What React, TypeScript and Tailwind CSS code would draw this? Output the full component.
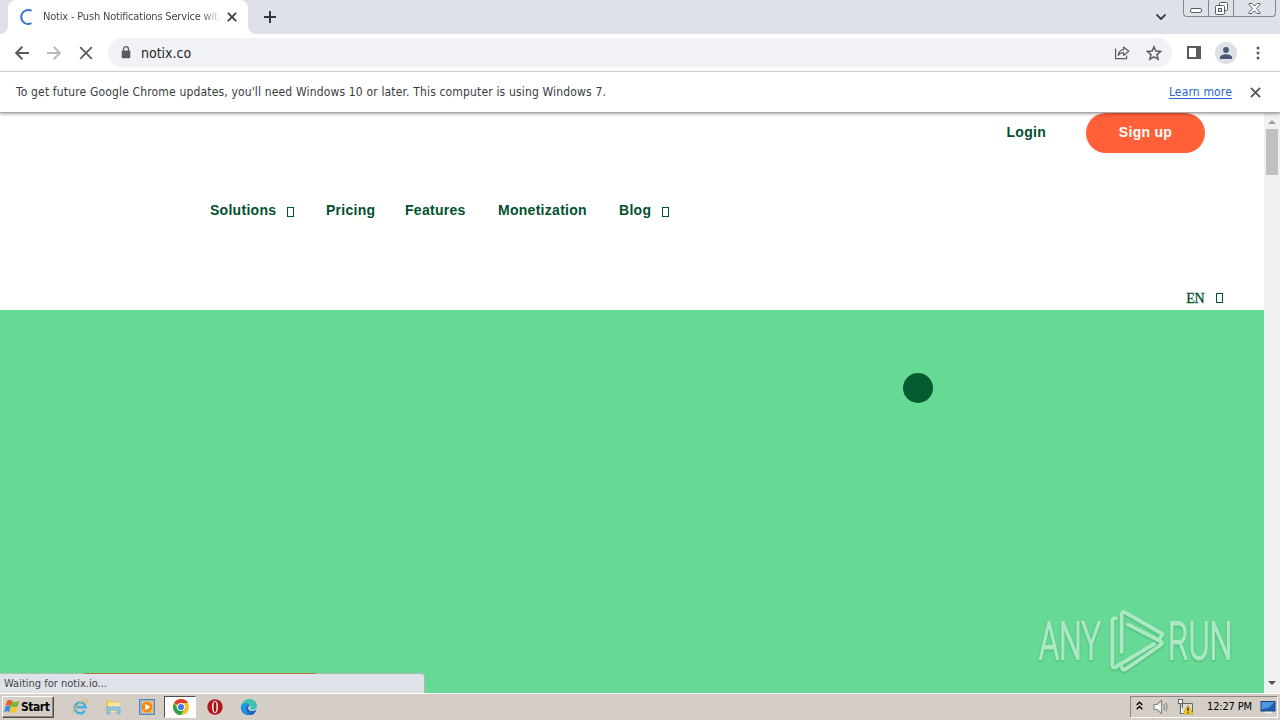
import { ChevronDown } from "lucide-react";

const NAV = [
  { label: "Solutions", menu: true, width: "w-[86px]" },
  { label: "Pricing", menu: false, width: "w-[49px]" },
  { label: "Features", menu: false, width: "w-[63px]" },
  { label: "Monetization", menu: false, width: "w-[91px]" },
  { label: "Blog", menu: true, width: "w-[52px]" },
];

function MissingGlyph() {
  return <span className="mt-[3px] block h-[10px] w-[7px] border border-[#03512d]" />;
}

function Cross({ className }: { className: string }) {
  return (
    <svg viewBox="0 0 12 12" className={className} fill="none" stroke="currentColor">
      <path d="M1 1l10 10M11 1L1 11" />
    </svg>
  );
}

function TabStrip() {
  return (
    <div className="flex h-[34px] items-start bg-[#dee1e8]">
      <div className="flex h-[34px] w-2 items-end bg-white">
        <div className="h-[34px] w-2 rounded-br-lg bg-[#dee1e8]" />
      </div>
      <div className="flex h-[34px] w-[240px] items-center rounded-t-lg bg-white pl-[11px]">
        <svg viewBox="0 0 16 16" className="h-4 w-4 shrink-0" fill="none" stroke="#3975cd" strokeWidth="2">
          <path d="M12.5 1.8A7 7 0 1 0 12.5 14.2" />
        </svg>
        <div className="ml-2 w-[176px] overflow-hidden bg-linear-to-r from-[#3c4043] from-90% to-[#3c4043]/15 bg-clip-text text-[11px] tracking-[-0.19px] whitespace-nowrap text-transparent">
          Notix - Push Notifications Service with
        </div>
        <Cross className="ml-2 h-[10px] w-[10px] stroke-[2.2] text-[#3c4043]" />
      </div>
      <div className="h-[34px] w-2 bg-white">
        <div className="h-[34px] w-2 rounded-bl-lg bg-[#dee1e8]" />
      </div>
      <svg viewBox="0 0 12 12" className="mt-[11px] ml-2 h-3 w-3" stroke="#35383d" strokeWidth="2">
        <path d="M6 0v12M0 6h12" />
      </svg>
      <ChevronDown className="mt-[9px] ml-auto h-4 w-4 text-[#3c4043]" strokeWidth={2.7} />
      <div className="mr-[4px] ml-[14px] flex h-[17px] w-[93px] rounded-b-[4px] border border-t-0 border-[#85878d] text-[#5b5d66]">
        <div className="flex w-[25px] justify-center border-r border-[#85878d] pt-[8px]">
          <div className="h-[5px] w-3 rounded-[2px] border border-[#5b5d66] bg-white" />
        </div>
        <div className="flex w-[25px] justify-center border-r border-[#85878d] pt-[2px]">
          <svg viewBox="0 0 13 13" className="h-[13px] w-[13px]" fill="#fff" stroke="currentColor">
            <rect x="4.5" y=".5" width="8" height="8" rx="1" />
            <rect x=".5" y="3.5" width="9" height="9" rx="1" />
            <rect x="3.5" y="6.5" width="3" height="3" fill="#dee1e8" />
          </svg>
        </div>
        <div className="flex flex-1 justify-center pt-[3px]">
          <svg viewBox="0 0 13 11" className="h-[11px] w-[13px]" fill="#fff" stroke="currentColor">
            <path d="M1 .5h3l2.5 2.7L9 .5h3v1L8.5 5.5l3.5 4v1H9L6.5 7.8 4 10.5H1v-1l3.5-4L1 1.5z" />
          </svg>
        </div>
      </div>
    </div>
  );
}

function Toolbar() {
  return (
    <div className="flex h-[38px] items-center border-b border-[#d9dadd] bg-white text-[#5a5c60]">
      <svg viewBox="0 0 14 14" className="ml-[15px] h-[14px] w-[14px]" fill="none" stroke="currentColor" strokeWidth="2">
        <path d="M14 7H1.5M7.3 .8L1.2 7l6.1 6.2" />
      </svg>
      <svg viewBox="0 0 14 14" className="ml-[18px] h-[14px] w-[14px]" fill="none" stroke="#b7b9bc" strokeWidth="2">
        <path d="M0 7h12.5M6.7 .8L12.8 7l-6.1 6.2" />
      </svg>
      <Cross className="ml-[18px] h-[14px] w-[14px] stroke-[1.5]" />
      <div className="ml-[15px] flex h-[29px] w-[1064px] items-center rounded-full bg-[#f0f2f5] pr-2.5 pl-[13px]">
        <svg viewBox="0 0 10 13" className="h-[13px] w-[10px]">
          <rect x=".7" y="4.6" width="8.6" height="7.6" rx="1" fill="currentColor" />
          <path d="M2.5 5V3.2a2.5 2.5 0 0 1 5 0V5" fill="none" stroke="currentColor" strokeWidth="1.3" />
        </svg>
        <div className="ml-[10px] pt-[2px] text-[14px] text-[#25272c]">notix.co</div>
        <svg viewBox="0 0 16 15" className="ml-auto h-[15px] w-4" fill="none" stroke="currentColor" strokeWidth="1.2" strokeLinejoin="round">
          <path d="M1.600 3.500v10.200h11V10.500M4.200 10.300C4.800 6.500 6.500 4.700 9.700 4.600V2l5 4.200-5 4.200V7.700c-2.500 0-4.200.8-5.500 2.600z" />
        </svg>
        <svg viewBox="0 0 16 16" className="ml-4 h-4 w-4" fill="none" stroke="currentColor" strokeWidth="1.5">
          <path d="M8 1.800l1.900 4.300 4.700.4-3.600 3.100 1.100 4.600L8 11.800l-4.100 2.400L5 9.600 1.400 6.500l4.700-.4z" />
        </svg>
      </div>
      <div className="ml-[15px] h-[13px] w-[14px] border-2 border-r-[5px] border-[#5a5c60]" />
      <div className="ml-[14px] flex h-[22px] w-[22px] items-center justify-center rounded-full bg-[#dde1e7]">
        <svg viewBox="0 0 12 12" className="h-3 w-3" fill="#4b5878">
          <circle cx="6" cy="3" r="2.9" />
          <path d="M0 12v-1.600C0 8.300 3.500 7.300 6 7.300s6 1 6 3.100V12z" />
        </svg>
      </div>
      <svg viewBox="0 0 4 14" className="ml-[19px] h-[14px] w-1" fill="currentColor">
        <circle cx="2" cy="2" r="1.5" />
        <circle cx="2" cy="7" r="1.5" />
        <circle cx="2" cy="12" r="1.5" />
      </svg>
    </div>
  );
}

function InfoBar() {
  return (
    <div className="relative z-10 flex h-[41px] items-center border-b border-[#a9a9a9] bg-white pr-[19px] pl-4 text-[12px] tracking-[0.16px] text-[#3a3c40] shadow-[0_1px_3px_rgba(0,0,0,0.35)]">
      <div className="whitespace-nowrap">
        To get future Google Chrome updates, you'll need Windows 10 or later. This computer is using Windows 7.
      </div>
      <div className="ml-auto text-[#2666c8] underline underline-offset-2">Learn more</div>
      <Cross className="ml-[18px] h-[11px] w-[11px] stroke-[2.1] text-[#5a5c60]" />
    </div>
  );
}

function Watermark() {
  return (
    <svg
      viewBox="0 0 200 70"
      className="absolute right-[27px] bottom-[17px] h-[70px] w-[200px] overflow-visible drop-shadow-[0_1px_1px_rgba(0,80,40,0.3)]"
    >
      <g fill="#aae9c4" stroke="#aae9c4" strokeWidth="1.8" fontFamily="Roboto, sans-serif" fontSize="51" fontWeight="300">
        <text transform="translate(2 53) scale(.63 1)">ANY</text>
        <text transform="translate(131 53) scale(.63 1)">RUN</text>
      </g>
      <g fill="none" stroke="#aae9c4" strokeWidth="3.8" strokeLinejoin="round" strokeLinecap="round">
        <path d="M79 12.500c-2-1-3.700 0-3.700 2V59c0 2.500 1.500 3 3.500 2L117 38" />
        <path d="M84.700 46V8.500c0-2.500 1.500-3 3.500-2L125.500 28l-2 3.500" />
        <path d="M91 18.500l32 16.500c2.500 1.500 2.500 3 0 4.500L89 63c-2.500 1.500-4 .5-4-1.500" />
      </g>
    </svg>
  );
}

function StatusBubble() {
  return (
    <div className="absolute bottom-0 left-0 w-[425px]">
      <div className="h-5 rounded-tr-[4px] border-t border-r border-[#aeb9b8] bg-[#dfe2e9] pt-px pl-1 text-[11px] leading-[18px] text-[#44464a]">
        Waiting for notix.io...
      </div>
      <div className="absolute top-0 left-[84px] h-px w-[232px] bg-[#b5703f]" />
    </div>
  );
}

function Page() {
  return (
    <div className="flex h-[580px] bg-white">
      <div className="relative flex w-[1264px] flex-col overflow-hidden">
        <div className="h-[197px] font-['Liberation_Sans',Arial,sans-serif] text-[14px] font-bold tracking-[0.28px] text-[#03512d]">
          <div className="flex h-10 items-center justify-end gap-10 pr-[59px]">
            <span className="-mt-0.5">Login</span>
            <span className="flex h-10 w-[119px] items-center justify-center rounded-full bg-[#ff6037] pb-0.5 text-white">
              Sign up
            </span>
          </div>
          <div className="mt-[47px] flex h-5 items-center gap-[30px] pl-[210px]">
            {NAV.map((item) => (
              <span key={item.label} className={`flex items-center gap-[11px] ${item.width}`}>
                {item.label}
                {item.menu && <MissingGlyph />}
              </span>
            ))}
          </div>
          <div className="mt-[68px] flex h-5 items-center justify-end gap-[12px] pr-[41px] font-['Liberation_Serif',serif] font-normal tracking-[-0.5px]">
            <span className="pt-px [-webkit-text-stroke:0.3px_#03512d]">EN</span>
            <span className="-mt-[3px]">
              <MissingGlyph />
            </span>
          </div>
        </div>
        <div className="flex-1 bg-[#66da94] pt-[63px] pl-[903px]">
          <div className="h-[30px] w-[30px] rounded-full bg-[#045b30]" />
        </div>
        <Watermark />
        <StatusBubble />
      </div>
      <div className="flex w-4 flex-col items-center bg-[#f1f1f1]">
        <svg viewBox="0 0 8 4" className="mt-[7px] h-1 w-2" fill="#a0a0a0">
          <path d="M0 4l4-4 4 4z" />
        </svg>
        <div className="mt-[5px] h-[46px] w-3 bg-[#c1c1c1]" />
        <svg viewBox="0 0 8 4" className="mt-auto mb-[8px] h-1 w-2" fill="#505050">
          <path d="M0 0l4 4 4-4z" />
        </svg>
      </div>
    </div>
  );
}

function StartFlag() {
  return (
    <svg viewBox="0 0 16 16" className="h-4 w-4 shrink-0">
      <path d="M3 2c2-1.500 3.500-1 5.300 0L7 7.500C5 6 3.500 6 1.500 7z" fill="#e85c24" />
      <path d="M8.300 2.300c2 1 4 1 7-.5L13.700 7.500c-2 1-4 1-6.700 0z" fill="#75b736" />
      <path d="M1.500 7.500c2-1.200 3.500-1 5.300 0L5.400 13C3.500 12 2 12 0 13z" fill="#3b8ddb" />
      <path d="M6.900 7.800c2 1 4 1 6.800-.2l-1.500 5.300c-2 1.200-4 1.300-6.700.3z" fill="#f7c52c" />
    </svg>
  );
}

function Explorer() {
  return (
    <svg viewBox="0 0 18 18" className="h-[18px] w-[18px]" fill="none">
      <path d="M13.800 12.600A5.400 5.400 0 1 1 14.500 9.300H5" stroke="#45afe6" strokeWidth="2.600" />
      <path d="M2.500 16.500C-1 14 10 2 15.500 2c1.500.8.800 2.500-.2 4" stroke="#e2bf4e" strokeWidth="1.200" />
    </svg>
  );
}

function Folder() {
  return (
    <svg viewBox="0 0 16 16" className="h-4 w-4">
      <path d="M1 1h5l1 1.500h6V13H1z" fill="#e5c568" />
      <path d="M3 3.500h12V13H3z" fill="#f7e6a0" />
      <path d="M2 8h13v7h-3v-4H5v4H2z" fill="#8fcbe8" stroke="#609cbd" strokeWidth=".6" />
    </svg>
  );
}

function MediaPlayer() {
  return (
    <svg viewBox="0 0 16 16" className="h-4 w-4">
      <rect x=".5" y=".5" width="15" height="15" fill="#8ab9df" stroke="#5188b8" />
      <rect x="3" y="2" width="11" height="12" fill="#f7c27c" />
      <circle cx="8" cy="8" r="5.5" fill="#f28914" />
      <path d="M6.300 4.800v6.400L11.300 8z" fill="#fff" />
    </svg>
  );
}

function ChromeLogo() {
  return (
    <svg viewBox="0 0 16 16" className="h-4 w-4">
      <circle cx="8" cy="8" r="8" fill="#fbc116" />
      <path d="M8 8L1.070 4A8 8 0 0 1 14.930 4H8z" fill="#e33b2e" />
      <path d="M1.070 4A8 8 0 0 0 8 16l3.460-6L8 8 4.540 10z" fill="#2da14c" />
      <circle cx="8" cy="8" r="4" fill="#fff" />
      <circle cx="8" cy="8" r="3.1" fill="#3f7fe8" />
    </svg>
  );
}

function OperaLogo() {
  return (
    <svg viewBox="0 0 16 16" className="h-4 w-4">
      <circle cx="8" cy="8" r="7.7" fill="#b5151c" />
      <ellipse cx="8" cy="8" rx="3" ry="6.2" fill="#f3e9e9" />
      <ellipse cx="8" cy="8" rx="1.4" ry="5.2" fill="#981019" />
    </svg>
  );
}

function EdgeLogo() {
  return (
    <svg viewBox="0 0 16 16" className="h-4 w-4">
      <path d="M0 8.500C0 3.500 5 2 8.500 6L7 9c.5 3 4.500 4 7.500 2.200.7-.3 1 .2.600.8A8 8 0 0 1 0 8.500z" fill="#1668c4" />
      <path d="M0 7.500C1 2.500 4.500 0 8.300 0 13 0 16 3.500 16 6.800c0 2.500-2 4-4.200 4-2 0-3-.9-2.200-2.100C11 6.500 5 2.500 0 7.500z" fill="#3fc3b0" />
      <path d="M0 7.800c1-4.300 6-5 9-2C5 6 4 10 6 13c.8 1.300 1.700 2.200 2.800 2.900A8 8 0 0 1 0 7.800z" fill="#2295df" />
    </svg>
  );
}

function Taskbar() {
  return (
    <div className="flex h-[27px] items-start border-t border-white bg-[#d5cec7] pt-[2px]">
      <div className="ml-[2px] flex h-[22px] w-[52px] items-center border border-t-white border-r-[#514e4a] border-b-[#514e4a] border-l-white pl-px text-black shadow-[inset_-1px_-1px_#8c8780]">
        <StartFlag />
        <span className="ml-px text-[12px] font-bold tracking-[-0.45px]">Start</span>
      </div>
      <div className="ml-[17px] flex h-[22px] items-center">
        <Explorer />
        <span className="ml-[16px]"><Folder /></span>
        <span className="ml-[18px]"><MediaPlayer /></span>
        <div className="ml-[9px] flex h-[22px] w-[32px] items-center justify-center border border-t-[#514e4a] border-r-white border-b-white border-l-[#514e4a] bg-white pl-px">
          <ChromeLogo />
        </div>
        <span className="ml-[11px]"><OperaLogo /></span>
        <span className="ml-[18px]"><EdgeLogo /></span>
      </div>
      <div className="mr-[2px] ml-auto flex h-[22px] w-[148px] items-center border border-t-[#8c8780] border-r-white border-b-white border-l-[#8c8780] text-black">
        <svg viewBox="0 0 7 9" className="mb-[3px] ml-[5px] h-[9px] w-[7px]" fill="none" stroke="#000" strokeWidth="1.4">
          <path d="M.7 4l2.800-2.800L6.300 4M.7 8.200l2.800-2.800 2.800 2.800" />
        </svg>
        <svg viewBox="0 0 17 16" className="ml-[10px] h-4 w-[17px]" fill="none" stroke="#85878a" strokeWidth="1.1">
          <path d="M1 5.500h3L8.500 1.500v13L4 10.500H1z" fill="#f5f5f5" />
          <path d="M10.500 5q2 3 0 6M12.500 3.500q3.200 4.500 0 9" />
        </svg>
        <svg viewBox="0 0 17 16" className="ml-[7px] h-4 w-[17px]">
          <path d="M5.500 4.500h10v8h-10z" fill="#d9dcde" stroke="#65686b" />
          <path d="M1.500.5h4v4h-4zM3.500 4.500v10h4" fill="#fff" stroke="#65686b" strokeWidth="1.2" />
          <path d="M11 6l5 9H6z" fill="#f6cf1a" stroke="#c69b12" strokeWidth=".7" />
          <path d="M11 8.500v3.800M11 13.200v1.200" stroke="#222" strokeWidth="1.3" />
        </svg>
        <span className="ml-[13px] w-[48px] text-[11px] tracking-[-0.15px] whitespace-nowrap">12:27 PM</span>
        <svg viewBox="0 0 16 14" className="ml-[5px] h-[14px] w-4">
          <rect x="1" y="1.5" width="14" height="9.5" fill="#1d5eb4" stroke="#174481" />
          <path d="M1.500 2h13L9 7.500l-7.500 2z" fill="#4c98df" />
          <path d="M5 12.500h7" stroke="#e8eef3" strokeWidth="1.5" />
        </svg>
      </div>
    </div>
  );
}

export default function App() {
  return (
    <div className="flex h-[720px] w-[1280px] flex-col overflow-hidden font-['DejaVu_Sans_Condensed','DejaVu_Sans',sans-serif]">
      <TabStrip />
      <Toolbar />
      <InfoBar />
      <Page />
      <Taskbar />
    </div>
  );
}
